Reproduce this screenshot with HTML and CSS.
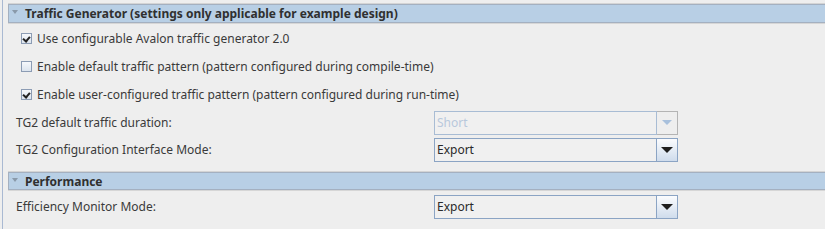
FILE: index.html
```html
<!DOCTYPE html>
<html>
<head>
<meta charset="utf-8">
<link rel="stylesheet" href="styles.css">
</head>
<body>
<div class="panel">
  <div class="section-header"><span class="tri"></span><span class="title">Traffic Generator (settings only applicable for example design)</span></div>
  <div class="check-row"><span class="cb checked"></span><span class="lbl">Use configurable Avalon traffic generator 2.0</span></div>
  <div class="check-row"><span class="cb"></span><span class="lbl">Enable default traffic pattern (pattern configured during compile-time)</span></div>
  <div class="check-row"><span class="cb checked"></span><span class="lbl">Enable user-configured traffic pattern (pattern configured during run-time)</span></div>
  <div class="field-row first">
    <span class="flabel">TG2 default traffic duration:</span>
    <div class="combo disabled"><span class="ctext">Short</span><span class="cbtn"><span class="arrow"></span></span></div>
  </div>
  <div class="field-row">
    <span class="flabel">TG2 Configuration Interface Mode:</span>
    <div class="combo"><span class="ctext">Export</span><span class="cbtn"><span class="arrow"></span></span></div>
  </div>
  <div class="section-header second"><span class="tri"></span><span class="title">Performance</span></div>
  <div class="field-row after-header">
    <span class="flabel">Efficiency Monitor Mode:</span>
    <div class="combo"><span class="ctext">Export</span><span class="cbtn"><span class="arrow"></span></span></div>
  </div>
</div>
</body>
</html>
```
FILE: styles.css
```css
html, body {
  margin: 0;
  padding: 0;
  background: #eeeeee;
}
body {
  font-family: "Noto Sans", "DejaVu Sans", sans-serif;
  font-size: 12px;
  color: #3a3a3a;
  width: 825px;
  height: 229px;
  overflow: hidden;
}
.panel {
  margin-left: 2px;
  border-left: 1px solid #a9b9d2;
  height: 229px;
  padding: 4px 0 0 5px;
  box-sizing: border-box;
}
.section-header {
  display: flex;
  align-items: center;
  height: 19px;
  box-sizing: border-box;
  background: #b8cfe5;
  border: 1px solid #a4b0c0;
  border-right: none;
  box-shadow: 0 -1px 0 #d4d4d4, 0 1px 0 #d6d6d6;
}
.section-header.second {
  margin-top: 9px;
  height: 18px;
}
.tri {
  width: 0;
  height: 0;
  border-left: 3px solid transparent;
  border-right: 3px solid transparent;
  border-top: 4px solid #8a9aaa;
  margin: 0 7px 3px 3px;
}
.title {
  font-weight: bold;
  color: #303030;
  font-size: 12px;
}
.check-row {
  display: flex;
  align-items: center;
  height: 28px;
  padding-left: 13px;
}
.section-header + .check-row { margin-top: 1px; }
.cb {
  width: 9px;
  height: 9px;
  border: 1px solid #8c9cb4;
  background: linear-gradient(#f6f8fb, #dce4ee);
  margin-right: 5px;
  position: relative;
}
.cb.checked::after {
  content: "";
  position: absolute;
  left: 2px;
  top: 1px;
  width: 3px;
  height: 5px;
  border-right: 2px solid #222;
  border-bottom: 2px solid #222;
  transform: rotate(40deg);
}
.lbl { color: #3a3a3a; }
.field-row {
  display: flex;
  align-items: center;
  height: 27px;
  padding-left: 8px;
}
.field-row.first { margin-top: 1px; }
.field-row.after-header { margin-top: 3px; }
.flabel {
  width: 418px;
}
.combo {
  display: flex;
  width: 244px;
  height: 24px;
  box-sizing: border-box;
}
.ctext {
  flex: 1;
  border: 1px solid #8ba4c4;
  background: #f0f0f0;
  display: flex;
  align-items: center;
  padding-left: 2px;
  color: #2a2a2a;
}
.cbtn {
  width: 20px;
  border: 1px solid #8ba4c4;
  border-left: none;
  background: linear-gradient(#fbfcfe, #cfdcec);
  display: flex;
  align-items: center;
  justify-content: center;
}
.arrow {
  width: 0;
  height: 0;
  border-left: 6px solid transparent;
  border-right: 6px solid transparent;
  border-top: 6px solid #1e1e1e;
}
.combo.disabled .ctext {
  color: #b8c8dc;
  border-color: #a8bcd4;
}
.combo.disabled .cbtn {
  background: #eeeeee;
  border-color: #b4b4b4;
}
.combo.disabled .arrow {
  border-top-color: #a8c0dc;
  border-left-width: 5px;
  border-right-width: 5px;
  border-top-width: 5px;
}
```
